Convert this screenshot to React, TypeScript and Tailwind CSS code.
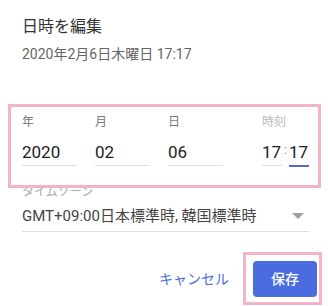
import { ReactNode } from 'react'

const font = "font-['Roboto','Noto_Sans_CJK_JP',sans-serif]"

function Field({ label, value, width }: { label: string; value: string; width: string }) {
  return (
    <div className={`flex flex-col ${width}`}>
      <span className="text-[12px] leading-4 text-[#777]">{label}</span>
      <span className="mt-[10px] pb-[1px] border-b border-[#ddd] text-[17px] leading-6 text-[#222]">{value}</span>
    </div>
  )
}

function Highlight({ className }: { className: string }) {
  return <div className={`pointer-events-none absolute border-[3px] border-[#f4b4c8] ${className}`} />
}

function Row({ children }: { children: ReactNode }) {
  return <div className="flex items-start">{children}</div>
}

export default function App() {
  return (
    <div className={`relative w-[328px] h-[306px] overflow-hidden bg-white ${font}`}>
      <header className="pl-[22px] pt-[15px]">
        <h1 className="text-[16px] leading-6 text-[#333]">日時を編集</h1>
        <p className="mt-[5px] text-[14px] leading-5 text-[#666]">2020年2月6日木曜日 17:17</p>
      </header>

      <section className="mt-[50px] pl-[22px] pr-[19px]">
        <Row>
          <Field label="年" value="2020" width="w-[55px]" />
          <div className="ml-[18px]">
            <Field label="月" value="02" width="w-[55px]" />
          </div>
          <div className="ml-[18px]">
            <Field label="日" value="06" width="w-[55px]" />
          </div>
          <div className="ml-auto flex flex-col">
            <span className="text-[12px] leading-4 text-[#bbb]">時刻</span>
            <div className="mt-[10px] flex items-start">
              <span className="w-[20px] pb-[1px] border-b border-[#ddd] text-[17px] leading-6 text-[#222]">17</span>
              <span className="w-[7px] text-center text-[13px] leading-5 text-[#999]">:</span>
              <span className="w-[20px] pb-[1px] border-b-2 border-[#5c6bc0] text-[17px] leading-6 text-[#222]">17</span>
            </div>
          </div>
        </Row>

        <div className="mt-[17px]">
          <span className="block text-[12px] leading-4 text-[#aaa]">タイムゾーン</span>
          <div className="mt-[6px] flex items-center justify-between border-b border-[#ddd] pb-[5px]">
            <span className="text-[15px] leading-5 text-[#444]">GMT+09:00日本標準時, 韓国標準時</span>
            <svg width="12" height="6" viewBox="0 0 12 6" className="mr-[5px]">
              <path d="M0 0h12L6 6z" fill="#a0a0a0" />
            </svg>
          </div>
        </div>
      </section>

      <footer className="mt-[29px] flex items-center justify-end pr-[11px]">
        <button type="button" className="mr-[24px] text-[14px] leading-5 text-[#4a6ee0]">
          キャンセル
        </button>
        <button type="button" className="h-[36px] w-[64px] rounded-[4px] bg-[#4b6ce0] text-[14px] font-medium text-white">
          保存
        </button>
      </footer>

      <Highlight className="left-[8px] top-[104px] w-[313px] h-[84px]" />
      <Highlight className="left-[243px] top-[252px] w-[79px] h-[53px]" />
    </div>
  )
}
